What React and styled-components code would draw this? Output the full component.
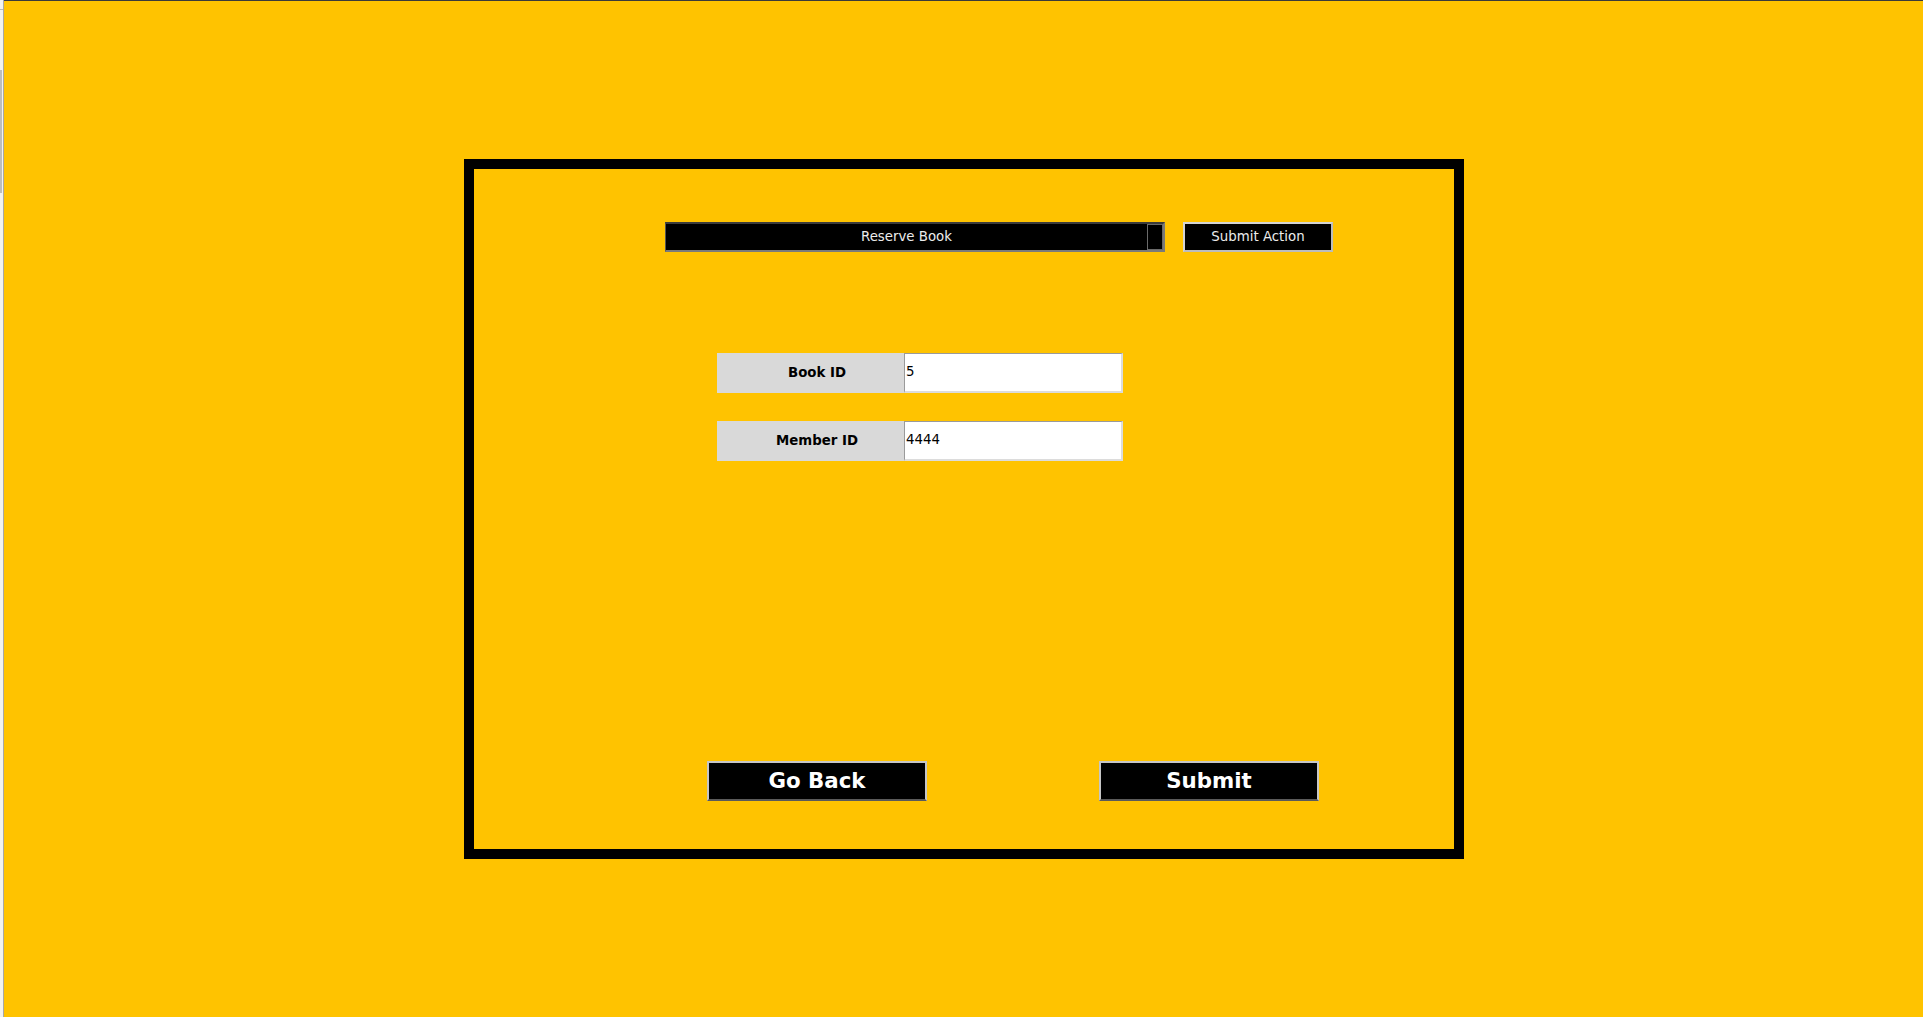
import React from 'react';
import styled, { createGlobalStyle } from 'styled-components';

const GlobalStyle = createGlobalStyle`
    html, body {
        margin: 0;
        padding: 0;
        background: #ffc300;
        font-family: "DejaVu Sans", "Liberation Sans", sans-serif;
    }
    * {
        box-sizing: border-box;
    }
`;

const Page = styled.div`
    display: flex;
    width: 100vw;
    height: 100vh;
    overflow: hidden;
`;

const Edge = styled.div`
    width: 4px;
    height: 100%;
    background: #f2f2f2;
    border-right: 1px solid #a8a8a8;
    display: flex;
    flex-direction: column;
    padding-top: 9px;
`;

const EdgeTick = styled.div`
    width: 3px;
    height: 1px;
    background: #b8b8b8;
`;

const EdgeBar = styled.div`
    width: 2px;
    height: 123px;
    margin-top: 60px;
    background: #bdbdbd;
`;

const Window = styled.div`
    flex: 1;
    background: #ffc300;
    border-top: 1px solid #3a3a3a;
    padding: 158px 0 0 460px;
`;

const Frame = styled.div`
    width: 1000px;
    height: 700px;
    border: 10px solid #000;
    display: flex;
    flex-direction: column;
`;

const TopBar = styled.div`
    display: flex;
    gap: 18px;
    margin: 53px 0 0 191px;
`;

const Dropdown = styled.div`
    width: 500px;
    height: 30px;
    background: #000;
    border-style: solid;
    border-width: 2px 2px 2px 1px;
    border-color: #3c3c3c #7a7a7a #7a7a7a #555;
    display: flex;
    align-items: center;
    color: #ececec;
    font-size: 13.33px;
`;

const DropdownLabel = styled.span`
    flex: 1;
    text-align: center;
    padding-bottom: 2px;
`;

const Indicator = styled.span`
    width: 16px;
    height: 26px;
    border: 1px solid #6a6a6a;
    background: #000;
`;

const ActionButton = styled.button`
    width: 150px;
    height: 30px;
    padding: 0 0 2px;
    background: #000;
    color: #ececec;
    font-family: inherit;
    font-size: 13.33px;
    border-style: solid;
    border-width: 2px;
    border-color: #d4d4d4 #bcbcbc #bcbcbc #d4d4d4;
    cursor: pointer;
`;

const Form = styled.div`
    display: flex;
    flex-direction: column;
    gap: 28px;
    margin: 101px 0 0 243px;
`;

const FieldRow = styled.div`
    display: flex;
    height: 40px;
`;

const FieldLabel = styled.label`
    width: 187px;
    height: 100%;
    padding: 0 0 2px 13px;
    background: #d9d9d9;
    color: #000;
    font-weight: bold;
    font-size: 13.33px;
    display: flex;
    align-items: center;
    justify-content: center;
`;

const FieldInput = styled.input`
    width: 219px;
    height: 100%;
    margin: 0;
    padding: 0 0 2px 1px;
    background: #fff;
    color: #000;
    font-family: inherit;
    font-size: 13.33px;
    border-style: solid;
    border-width: 1px 2px 2px 1px;
    border-color: #9a9a9a #dcdcdc #dcdcdc #9a9a9a;
    outline: none;
`;

const ButtonRow = styled.div`
    display: flex;
    gap: 172px;
    margin: 300px 0 0 233px;
`;

const BigButton = styled.button`
    width: 220px;
    height: 40px;
    padding: 0 0 2px;
    background: #000;
    color: #fff;
    font-family: inherit;
    font-weight: bold;
    font-size: 21.33px;
    border-style: solid;
    border-width: 2px;
    border-color: #c6c6c6 #c6c6c6 #5a5a5a #c6c6c6;
    cursor: pointer;
`;

const fields = [
    { label: 'Book ID', value: '5' },
    { label: 'Member ID', value: '4444' },
];

export default function App() {
    return (
        <>
            <GlobalStyle />
            <Page>
                <Edge>
                    <EdgeTick />
                    <EdgeBar />
                </Edge>
                <Window>
                    <Frame>
                        <TopBar>
                            <Dropdown>
                                <DropdownLabel>Reserve Book</DropdownLabel>
                                <Indicator />
                            </Dropdown>
                            <ActionButton>Submit Action</ActionButton>
                        </TopBar>
                        <Form>
                            {fields.map((f) => (
                                <FieldRow key={f.label}>
                                    <FieldLabel>{f.label}</FieldLabel>
                                    <FieldInput defaultValue={f.value} />
                                </FieldRow>
                            ))}
                        </Form>
                        <ButtonRow>
                            <BigButton>Go Back</BigButton>
                            <BigButton>Submit</BigButton>
                        </ButtonRow>
                    </Frame>
                </Window>
            </Page>
        </>
    );
}
